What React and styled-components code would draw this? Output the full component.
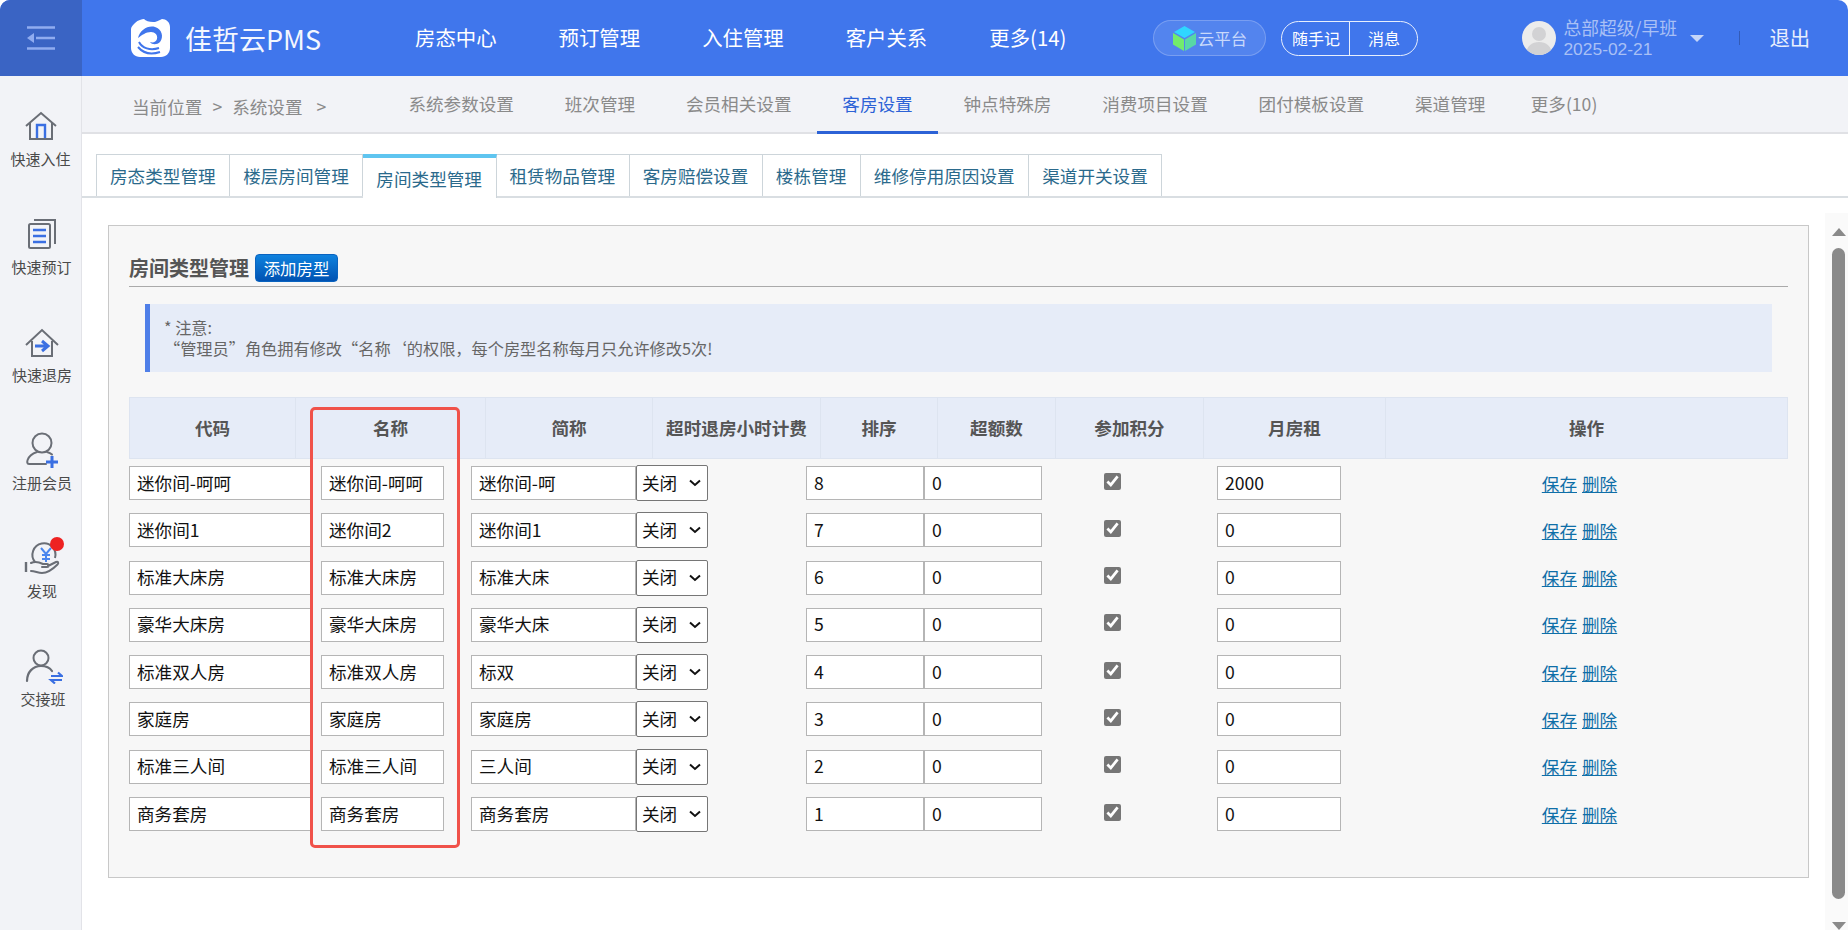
import React from 'react';
import styled, { createGlobalStyle } from 'styled-components';

const GlobalStyle = createGlobalStyle`
    html, body {
        margin: 0;
        height: 100%;
        overflow: hidden;
        background: #fff;
    }
    body, input, select {
        font-family: "Noto Sans CJK SC", "Noto Sans", sans-serif;
    }
`;

const Page = styled.div`
    width: 1848px;
    height: 930px;
    display: flex;
    flex-direction: column;
    overflow: hidden;
`;

/* top blue bar */
const Header = styled.header`
    height: 76px;
    flex: none;
    display: flex;
    align-items: center;
    background: #4076ec;
    border-radius: 10px 10px 0 0;
    overflow: hidden;
    color: #fff;
`;

const MenuToggle = styled.div`
    width: 82px;
    height: 100%;
    flex: none;
    display: flex;
    align-items: center;
    justify-content: center;
    background: #3a64c4;
`;

const Brand = styled.div`
    display: flex;
    align-items: center;
    gap: 15px;
    margin-left: 49px;
    width: 284px;
    flex: none;
`;

const BrandName = styled.span`
    font-size: 27px;
    white-space: nowrap;
    color: #f4f7fe;
`;

const MainNav = styled.nav`
    display: flex;
    gap: 62px;
    padding-bottom: 2px;
    font-size: 20.4px;
    white-space: nowrap;
`;

const CloudPill = styled.div`
    margin-left: 87px;
    width: 113px;
    height: 36px;
    box-sizing: border-box;
    flex: none;
    display: flex;
    align-items: center;
    justify-content: center;
    gap: 2px;
    border-radius: 18px;
    border: 1px solid rgba(255, 255, 255, 0.22);
    background: rgba(255, 255, 255, 0.1);
    color: #c9d9fb;
    font-size: 16.4px;
`;

const NotePill = styled.div`
    margin-left: 15px;
    width: 137px;
    height: 35px;
    box-sizing: border-box;
    flex: none;
    display: flex;
    border: 1px solid #e8effd;
    border-radius: 18px;
    font-size: 16px;
`;

const NotePart = styled.div`
    display: flex;
    align-items: center;
    justify-content: center;
    flex: ${p => (p.$wide ? '0 0 67px' : '1')};
    border-right: ${p => (p.$wide ? '1px solid #e8effd' : 'none')};
`;

const Avatar = styled.div`
    margin-left: 104px;
    width: 34px;
    height: 34px;
    flex: none;
    border-radius: 50%;
    overflow: hidden;
    background: #ececec;
`;

const UserInfo = styled.div`
    margin-left: 7px;
    width: 127px;
    flex: none;
    color: #a9c0f5;
    font-size: 17.8px;
    white-space: nowrap;
`;

const UserName = styled.div`
    line-height: 23px;
`;

const UserDate = styled.div`
    font-family: "Liberation Sans", sans-serif;
    font-size: 17.4px;
    line-height: 21px;
`;

const Caret = styled.div`
    width: 0;
    height: 0;
    flex: none;
    border-left: 7px solid transparent;
    border-right: 7px solid transparent;
    border-top: 7px solid #c5d5f8;
`;

const HeaderDivider = styled.div`
    width: 1px;
    height: 14px;
    flex: none;
    margin-left: 35px;
    background: rgba(40, 70, 140, 0.55);
`;

const Logout = styled.div`
    margin-left: 29px;
    padding-bottom: 2px;
    font-size: 20.4px;
    color: #e8effd;
    white-space: nowrap;
`;

const Body = styled.div`
    flex: 1;
    display: flex;
    min-height: 0;
`;

/* left quick links */
const SideBar = styled.aside`
    width: 82px;
    box-sizing: border-box;
    flex: none;
    display: flex;
    flex-direction: column;
    gap: 46px;
    padding-top: 32px;
    background: #f2f3f7;
    border-right: 1px solid #e2e3e8;
`;

const SideItem = styled.div`
    display: flex;
    flex-direction: column;
    align-items: center;
    gap: 4px;
    margin-left: ${p => p.$nudge}px;
`;

const IconSlot = styled.div`
    position: relative;
    width: 40px;
    height: 36px;
`;

const SideLabel = styled.div`
    font-size: 15px;
    line-height: 22px;
    color: #4a4a4a;
    white-space: nowrap;
`;

const RedDot = styled.span`
    position: absolute;
    top: -3px;
    left: 28px;
    width: 14px;
    height: 14px;
    border-radius: 50%;
    background: #ee2222;
`;

const Main = styled.main`
    flex: 1;
    min-width: 0;
    display: flex;
    flex-direction: column;
`;

const SubBar = styled.div`
    height: 58px;
    box-sizing: border-box;
    flex: none;
    display: flex;
    align-items: stretch;
    background: #f2f3f7;
    border-bottom: 2px solid #e0e1e5;
    color: #8a8a8a;
    font-size: 17.6px;
`;

const Crumbs = styled.div`
    width: 301px;
    box-sizing: border-box;
    flex: none;
    display: flex;
    gap: 10px;
    align-items: center;
    padding: 4px 0 0 50px;
    white-space: nowrap;
`;

const SubNav = styled.div`
    display: flex;
`;

const SubItem = styled.div`
    display: flex;
    align-items: center;
    padding: 1px ${p => (p.$tight ? 20 : 25.4)}px 1px ${p => (p.$tight ? 20 : 25.4)}px;
    margin-bottom: -2px;
    white-space: nowrap;
    color: ${p => (p.$active ? '#2c62d6' : '#8a8a8a')};
    border-bottom: 3px solid ${p => (p.$active ? '#2c62d6' : 'transparent')};
`;

const TabBar = styled.div`
    flex: none;
    display: flex;
    align-items: flex-end;
    height: 64px;
    box-sizing: border-box;
    padding: 20px 0 0 14px;
    border-bottom: 2px solid #d9dee2;
`;

const Tab = styled.div`
    height: ${p => (p.$active ? 44 : 42)}px;
    box-sizing: border-box;
    margin-bottom: ${p => (p.$active ? -2 : 0)}px;
    display: flex;
    align-items: center;
    padding: ${p => (p.$active ? '1px' : '0')} 13.6px 0 13px;
    font-size: 17.6px;
    white-space: nowrap;
    color: #2b6a8c;
    background: #fff;
    border-right: 1px solid #cdd5da;
    border-left: ${p => (p.$first ? '1px solid #cdd5da' : 'none')};
    border-top: ${p => (p.$active ? '4px solid #5fc5f0' : '1px solid #cdd5da')};
`;

const ContentRow = styled.div`
    flex: 1;
    min-height: 0;
    display: flex;
`;

const Panel = styled.section`
    width: 1701px;
    height: 653px;
    box-sizing: border-box;
    flex: none;
    margin: 27px 0 0 26px;
    padding: 28px 20px 0 20px;
    background: #f7f7f7;
    border: 1px solid #c8c8c8;
`;

const TitleRow = styled.div`
    display: flex;
    align-items: center;
    gap: 6px;
    padding-bottom: 4px;
    border-bottom: 1px solid #aaa;
`;

const Title = styled.h2`
    margin: 0;
    font-size: 20px;
    line-height: 28px;
    font-weight: 700;
    color: #555;
`;

const AddButton = styled.button`
    height: 28px;
    width: 83px;
    padding: 0;
    border: 1px solid #0a63bf;
    border-radius: 4px;
    background: linear-gradient(#0f82de, #0052b2);
    color: #fff;
    font-family: inherit;
    font-size: 16.4px;
    line-height: 26px;
`;

const Notice = styled.div`
    margin: 17px 16px 0 16px;
    height: 68px;
    box-sizing: border-box;
    padding: 13px 0 0 14px;
    background: #e6ecf8;
    border-left: 5px solid #4f7fe8;
    color: #666;
    font-size: 16.2px;
    line-height: 21px;
    white-space: pre;
`;

const TableWrap = styled.div`
    position: relative;
    margin-top: 25px;
`;

const HeadRow = styled.div`
    display: grid;
    grid-template-columns: 166px 190px 167px 168px 117px 118px 148px 182px 1fr;
    height: 62px;
    box-sizing: border-box;
    background: #e6ecf8;
    border: 1px solid #dde4f0;
`;

const HeadCell = styled.div`
    display: flex;
    align-items: center;
    justify-content: center;
    padding-bottom: 2px;
    font-size: 17.6px;
    font-weight: 700;
    color: #555;
    white-space: nowrap;
    border-right: 1px solid #dde4f0;
    &:last-child {
        border-right: none;
    }
`;

const Rows = styled.div`
    display: flex;
    flex-direction: column;
    gap: 13.3px;
    margin-top: 6px;
`;

const Row = styled.div`
    display: grid;
    grid-template-columns: 192px 150px 165px 170px 118px 118px 175px 168px 1fr;
    align-items: center;
    height: 34px;
`;

const TextInput = styled.input`
    width: ${p => p.$w}px;
    height: 34px;
    box-sizing: border-box;
    padding: 0 7px 2px 7px;
    background: #fff;
    border: 1px solid #b5b5b5;
    border-radius: 0;
    color: #111;
    font-size: 17.6px;
    outline: none;
`;

const RoomSelect = styled.select`
    appearance: none;
    width: 72px;
    height: 36px;
    box-sizing: border-box;
    padding: 0 0 2px 5px;
    background: #fff url("data:image/svg+xml,%3Csvg xmlns='http://www.w3.org/2000/svg' width='12' height='8'%3E%3Cpath d='M1 1.500l5 4.500 5-4.500' fill='none' stroke='%23111' stroke-width='2'/%3E%3C/svg%3E") no-repeat right 6px center;
    border: 1px solid #767676;
    border-radius: 2px;
    color: #111;
    font-size: 17.6px;
`;

const CheckCell = styled.div`
    display: flex;
    justify-content: center;
    padding: 0 35px 4px 0;
`;

const Check = styled.input`
    width: 17px;
    height: 17px;
    margin: 0;
    accent-color: #767676;
`;

const Actions = styled.div`
    display: flex;
    justify-content: center;
    gap: 5px;
    padding-right: 14px;
    font-size: 17.6px;
`;

const ActionLink = styled.a`
    color: #0f6fa8;
    text-decoration: underline;
    cursor: pointer;
`;

const RedFrame = styled.div`
    position: absolute;
    left: 181px;
    top: 10px;
    width: 150px;
    height: 441px;
    box-sizing: border-box;
    border: 3.5px solid #f0524a;
    border-radius: 5px;
    pointer-events: none;
`;

const ScrollTrack = styled.div`
    flex: none;
    width: 23px;
    margin: 15px 0 0 16px;
    display: flex;
    flex-direction: column;
    align-items: center;
    background: #fafafa;
    padding-left: 2px;
`;

const ArrowUp = styled.div`
    width: 0;
    height: 0;
    margin-top: 15px;
    border-left: 7.5px solid transparent;
    border-right: 7.5px solid transparent;
    border-bottom: 8px solid #8a8a8a;
`;

const Thumb = styled.div`
    width: 13px;
    height: 655px;
    margin-top: 12px;
    border-radius: 7px;
    background: #8a8a8a;
`;

const ArrowDown = styled.div`
    width: 0;
    height: 0;
    margin-top: 23px;
    border-left: 7.5px solid transparent;
    border-right: 7.5px solid transparent;
    border-top: 8px solid #8a8a8a;
`;

const GRAY = '#6a6e76';
const BLUE = '#3a6fe2';

const HomeIcon = () => (
    <svg width="40" height="36" viewBox="0 0 40 36" fill="none">
        <path d="M5 18 20 5l15 13M9 15v16h22V15" stroke={GRAY} strokeWidth="2" />
        <path d="M16 30V17h8v13" stroke={BLUE} strokeWidth="2.4" />
    </svg>
);

const BookIcon = () => (
    <svg width="40" height="36" viewBox="0 0 40 36" fill="none">
        <rect x="7" y="8" width="21" height="24" rx="1.5" stroke={GRAY} strokeWidth="2" />
        <path d="M12 4h21v24" stroke={GRAY} strokeWidth="2" />
        <path d="M11 14h13M11 20h13M11 26h13" stroke={BLUE} strokeWidth="2.4" />
    </svg>
);

const CheckoutIcon = () => (
    <svg width="40" height="36" viewBox="0 0 40 36" fill="none">
        <path d="M4 21 20 6l16 15M10 17v15h20V17" stroke={GRAY} strokeWidth="2" />
        <path d="M13 22h12M20 17l6 5-6 5" stroke={BLUE} strokeWidth="3" />
    </svg>
);

const MemberIcon = () => (
    <svg width="40" height="36" viewBox="0 0 40 36" fill="none">
        <circle cx="20" cy="11" r="9.5" stroke={GRAY} strokeWidth="2" />
        <path d="M24 32H7c-2 0-2-2-1.400-4C7 24 12 21 15 20M25 20c2 .5 4 1.500 5 2.500" stroke={GRAY} strokeWidth="2" strokeLinecap="round" />
        <path d="M24 30h12M30 24v12" stroke={BLUE} strokeWidth="3" />
    </svg>
);

const FindIcon = () => (
    <svg width="40" height="36" viewBox="0 0 40 36" fill="none">
        <path d="M13 22a11.500 11.500 0 1 1 20-4" stroke={GRAY} strokeWidth="2" />
        <path d="M4 22v10" stroke={GRAY} strokeWidth="2.400" />
        <path d="M9 23c4-2 8-1 12 1h4c2 0 2 3 0 3h-5M26 26l8-4c2-1 3 1 1.500 2.500C31 29 26 33 20 33c-4 0-7-2-11-2" stroke={GRAY} strokeWidth="2" strokeLinecap="round" />
        <path d="M19 8l5 6 5-6M24 14v8M20 15h8M20 19h8" stroke="#4a86ee" strokeWidth="2" />
    </svg>
);

const ShiftIcon = () => (
    <svg width="40" height="36" viewBox="0 0 40 36" fill="none">
        <circle cx="18" cy="10" r="7.500" stroke={GRAY} strokeWidth="2" />
        <path d="M4 33c0-9 6-15 14-15 5 0 9 2 11 5" stroke={GRAY} strokeWidth="2.200" strokeLinecap="round" />
        <path d="M28 28h11l-4-3.500M39 32H28l4 3.500" stroke={BLUE} strokeWidth="2.200" />
    </svg>
);

const sideItems = [
    { label: '快速入住', icon: <HomeIcon />, nudge: 0 },
    { label: '快速预订', icon: <BookIcon />, nudge: 2 },
    { label: '快速退房', icon: <CheckoutIcon />, nudge: 3 },
    { label: '注册会员', icon: <MemberIcon />, nudge: 3 },
    { label: '发现', icon: <FindIcon />, dot: true, nudge: 3 },
    { label: '交接班', icon: <ShiftIcon />, nudge: 5 },
];

const mainNav = ['房态中心', '预订管理', '入住管理', '客户关系', '更多(14)'];
const subNav = ['系统参数设置', '班次管理', '会员相关设置', '客房设置', '钟点特殊房', '消费项目设置', '团付模板设置', '渠道管理'];
const tabs = ['房态类型管理', '楼层房间管理', '房间类型管理', '租赁物品管理', '客房赔偿设置', '楼栋管理', '维修停用原因设置', '渠道开关设置'];
const heads = ['代码', '名称', '简称', '超时退房小时计费', '排序', '超额数', '参加积分', '月房租', '操作'];

const rooms = [
    { code: '迷你间-呵呵', name: '迷你间-呵呵', short: '迷你间-呵', sort: 8, rent: 2000 },
    { code: '迷你间1', name: '迷你间2', short: '迷你间1', sort: 7, rent: 0 },
    { code: '标准大床房', name: '标准大床房', short: '标准大床', sort: 6, rent: 0 },
    { code: '豪华大床房', name: '豪华大床房', short: '豪华大床', sort: 5, rent: 0 },
    { code: '标准双人房', name: '标准双人房', short: '标双', sort: 4, rent: 0 },
    { code: '家庭房', name: '家庭房', short: '家庭房', sort: 3, rent: 0 },
    { code: '标准三人间', name: '标准三人间', short: '三人间', sort: 2, rent: 0 },
    { code: '商务套房', name: '商务套房', short: '商务套房', sort: 1, rent: 0 },
];

const App = () => {
    return (
        <Page>
            <GlobalStyle />
            <Header>
                <MenuToggle>
                    <svg width="28" height="24" viewBox="0 0 28 24" fill="none">
                        <path d="M0 1.500h28M9 12h19M0 22.500h28" stroke="#90acf0" strokeWidth="2.400" />
                        <path d="M7 7v10L0 12z" fill="#90acf0" />
                    </svg>
                </MenuToggle>
                <Brand>
                    <svg width="39" height="38" viewBox="0 0 39 38">
                        <path d="M4 4c3-3 7-4 9-4 2 2 6 3.500 11 3 3-1 5-2 7-3 4 0 8 3 8 8v21c0 5-4 9-9 9H9c-5 0-9-4-9-9V10c0-2 2-4 4-6z" fill="#fff" />
                        <path d="M7 19C9 11 17 6 24 8c7 2 9 10 5 15-3 3-8 3-10 0 3 1 6 0 7-3 1-4-2-7-6-7-5 0-9 3-13 6z" fill="#4076ec" />
                        <path d="M8 23c3 6 11 9 20 6M7 28c5 6 13 8 22 5" stroke="#4076ec" strokeWidth="2" fill="none" />
                    </svg>
                    <BrandName>佳哲云PMS</BrandName>
                </Brand>
                <MainNav>
                    {mainNav.map(item => <span key={item}>{item}</span>)}
                </MainNav>
                <CloudPill>
                    <svg width="23" height="25" viewBox="0 0 23 25">
                        <path d="M11.500 0 22 6l-10.500 6L1 6z" fill="#2fd6ff" />
                        <path d="M0 7l11 6.500V25L0 18.500z" fill="#72ec6c" />
                        <path d="M23 7l-11 6.500V25l11-6.500z" fill="#58d8a6" />
                    </svg>
                    <span>云平台</span>
                </CloudPill>
                <NotePill>
                    <NotePart $wide>随手记</NotePart>
                    <NotePart>消息</NotePart>
                </NotePill>
                <Avatar>
                    <svg width="34" height="34" viewBox="0 0 34 34">
                        <circle cx="17" cy="13" r="7" fill="#d2d2d4" />
                        <path d="M4 34c0-9 6-13 13-13s13 4 13 13z" fill="#d2d2d4" />
                    </svg>
                </Avatar>
                <UserInfo>
                    <UserName>总部超级/早班</UserName>
                    <UserDate>2025-02-21</UserDate>
                </UserInfo>
                <Caret />
                <HeaderDivider />
                <Logout>退出</Logout>
            </Header>
            <Body>
                <SideBar>
                    {sideItems.map(item => (
                        <SideItem key={item.label} $nudge={item.nudge}>
                            <IconSlot>
                                {item.icon}
                                {item.dot && <RedDot />}
                            </IconSlot>
                            <SideLabel>{item.label}</SideLabel>
                        </SideItem>
                    ))}
                </SideBar>
                <Main>
                    <SubBar>
                        <Crumbs>
                            <span>当前位置</span>
                            <span>&gt;</span>
                            <span>系统设置</span>
                            <span>&nbsp;&gt;</span>
                        </Crumbs>
                        <SubNav>
                            {subNav.map(item => (
                                <SubItem key={item} $active={item === '客房设置'}>{item}</SubItem>
                            ))}
                            <SubItem $tight>更多(10)</SubItem>
                        </SubNav>
                    </SubBar>
                    <TabBar>
                        {tabs.map((tab, i) => (
                            <Tab key={tab} $first={i === 0} $active={i === 2}>{tab}</Tab>
                        ))}
                    </TabBar>
                    <ContentRow>
                        <Panel>
                            <TitleRow>
                                <Title>房间类型管理</Title>
                                <AddButton>添加房型</AddButton>
                            </TitleRow>
                            <Notice>{'* 注意:\n“管理员”角色拥有修改“名称‘的权限\uFF0C每个房型名称每月只允许修改5次!'}</Notice>
                            <TableWrap>
                                <HeadRow>
                                    {heads.map(h => <HeadCell key={h}>{h}</HeadCell>)}
                                </HeadRow>
                                <Rows>
                                    {rooms.map(room => (
                                        <Row key={room.sort}>
                                            <TextInput $w={182} defaultValue={room.code} />
                                            <TextInput $w={123} defaultValue={room.name} />
                                            <TextInput $w={165} defaultValue={room.short} />
                                            <RoomSelect defaultValue="off">
                                                <option value="off">关闭</option>
                                                <option value="on">开启</option>
                                            </RoomSelect>
                                            <TextInput $w={118} defaultValue={room.sort} />
                                            <TextInput $w={118} defaultValue="0" />
                                            <CheckCell>
                                                <Check type="checkbox" defaultChecked />
                                            </CheckCell>
                                            <TextInput $w={124} defaultValue={room.rent} />
                                            <Actions>
                                                <ActionLink>保存</ActionLink>
                                                <ActionLink>删除</ActionLink>
                                            </Actions>
                                        </Row>
                                    ))}
                                </Rows>
                                <RedFrame />
                            </TableWrap>
                        </Panel>
                        <ScrollTrack>
                            <ArrowUp />
                            <Thumb />
                            <ArrowDown />
                        </ScrollTrack>
                    </ContentRow>
                </Main>
            </Body>
        </Page>
    );
};

export default App;
